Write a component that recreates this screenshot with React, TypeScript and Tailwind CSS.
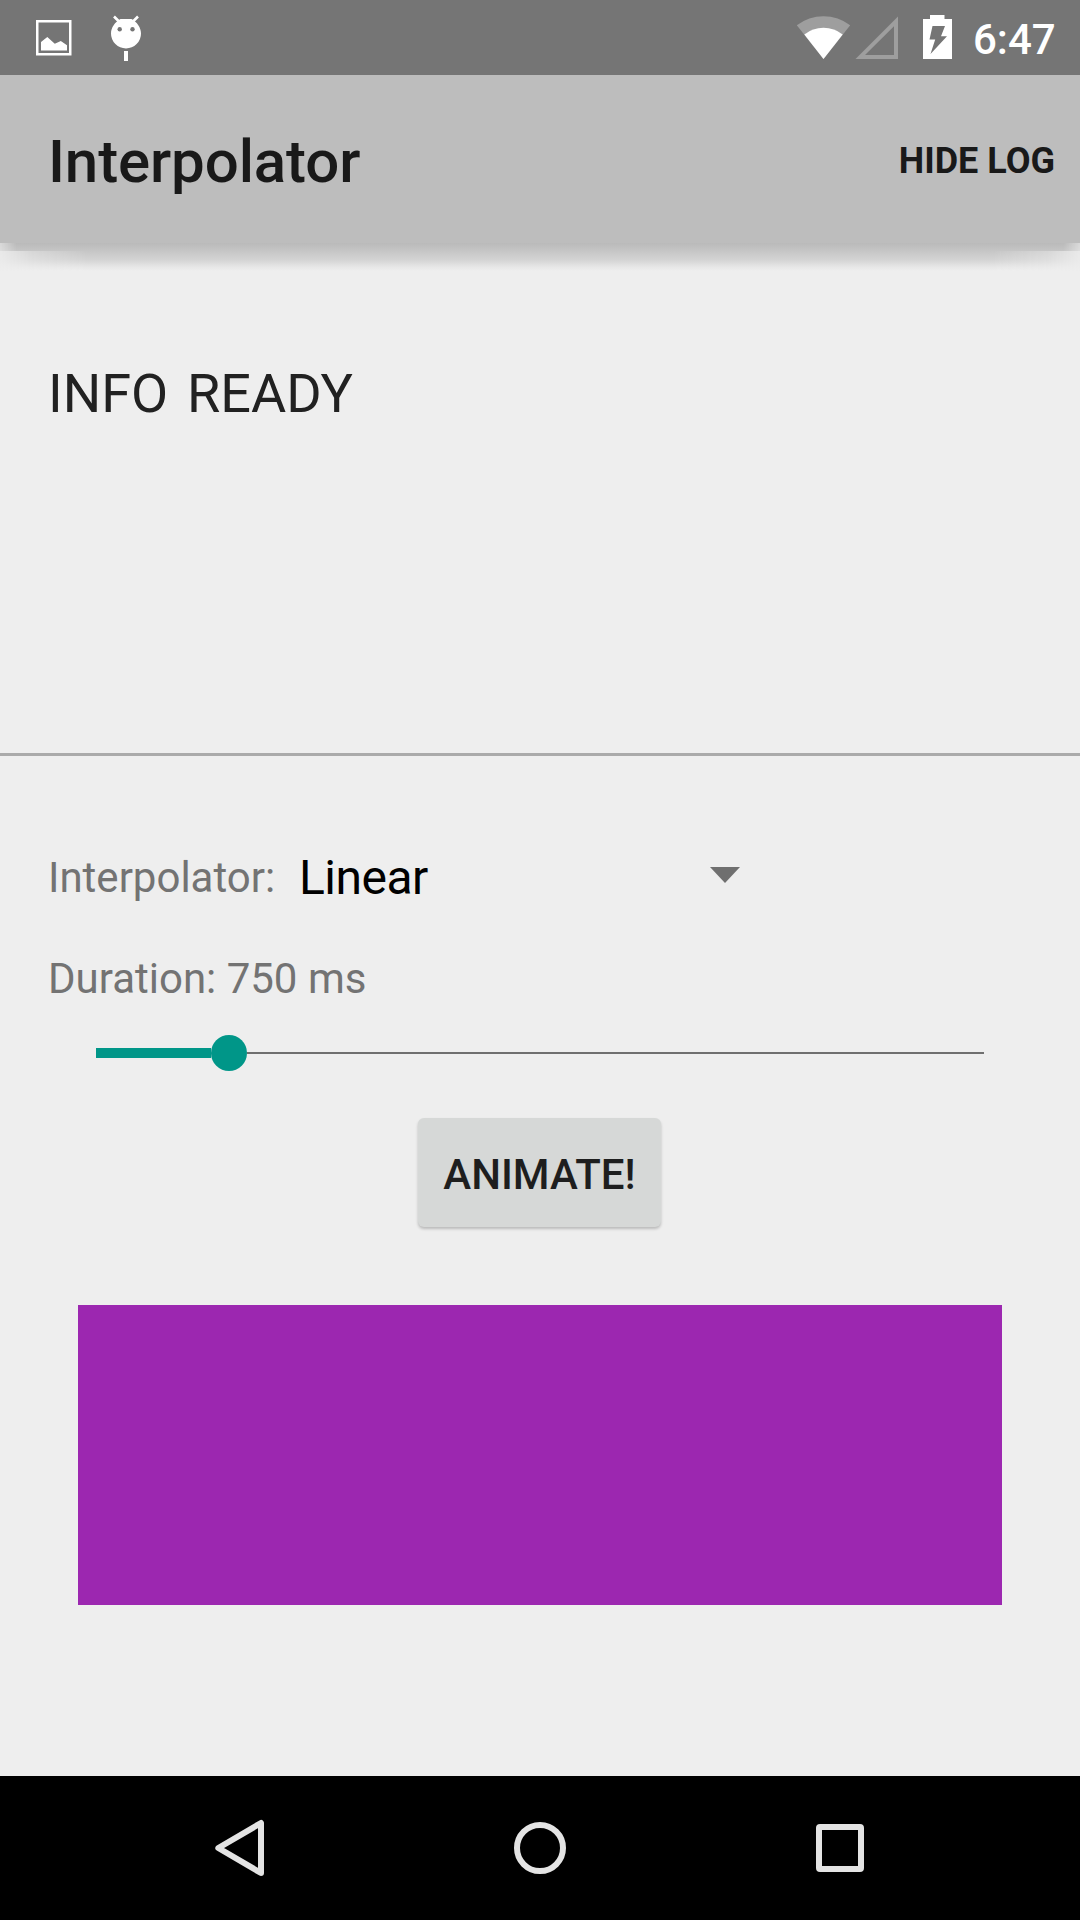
import React from 'react';

function StatusBar() {
  return (
    <div className="flex h-[75px] items-start bg-[#757575]">
      <svg width="200" height="75" viewBox="0 0 200 75" className="shrink-0">
        <path d="M36 20h35.500v35.500H36zM38.500 22.500v30.500h30.500V22.500z" fill="#fff" fillRule="evenodd" />
        <path d="M41 42l6.300-5 7.500 6.800 6-2.800 6.200 4.300V50.600H41z" fill="#fff" />
        <path d="M114 16.500l6 6M138 16.500l-6 6" stroke="#fff" strokeWidth="2.600" />
        <path d="M120.500 19h11C137 22 141 27.500 141 33.500a15 15 0 0 1-30 0C111 27.500 115 22 120.500 19z" fill="#fff" />
        <circle cx="119.700" cy="29.300" r="2.200" fill="#757575" />
        <circle cx="132.500" cy="29.300" r="2.200" fill="#757575" />
        <path d="M124 51h4v10h-4z" fill="#fff" />
      </svg>
      <div className="flex-1" />
      <svg width="174" height="75" viewBox="790 0 174 75" className="shrink-0">
        <path d="M796.800 25.300a43.500 43.500 0 0 1 53.400 0L823.500 59z" fill="#9e9e9e" />
        <path d="M804.300 34.500a31 31 0 0 1 38.400 0L823.500 59z" fill="#fff" />
        <path d="M898 16.500V59h-42.500zM894 26.300L865 55h29z" fill="#9e9e9e" fillRule="evenodd" />
        <path d="M930 15h14.500v4H952v40h-29V19h7z" fill="#fff" />
        <path d="M932.500 26H945l-4 10.300h6L930.500 54l4.700-14.500H929.500z" fill="#757575" />
      </svg>
      <span className="w-[116px] pl-[9px] pt-[15px] text-[42px] font-medium leading-[49px] text-white">6:47</span>
    </div>
  );
}

function AppBar() {
  return (
    <header className="relative z-10 flex h-[168px] items-center justify-between bg-[#bdbdbd] pl-12 pr-[25px] text-[#191919]">
      <h1 className="pt-1.5 text-[60px] font-medium leading-[70px] tracking-[-0.12px]">Interpolator</h1>
      <button className="pt-1 text-[36px] font-bold leading-[42px]">HIDE LOG</button>
      <div className="absolute left-0 top-full w-full">
        <div className="h-2 bg-linear-to-b from-[#bababa] to-[#c6c6c6] [mask-image:linear-gradient(to_right,rgba(0,0,0,0.4),black_1.5%,black_98.5%,rgba(0,0,0,0.4))]" />
        <div className="h-5 bg-[linear-gradient(to_bottom,#c6c6c6,#d4d4d4_45%,#e8e8e8_82%,#eeeeee)] [mask-image:linear-gradient(to_right,rgba(0,0,0,0.1),rgba(0,0,0,0.6)_3%,black_8%,black_92%,rgba(0,0,0,0.6)_97%,rgba(0,0,0,0.1))]" />
      </div>
    </header>
  );
}

function NavBar() {
  return (
    <nav className="flex h-[144px] items-center justify-center gap-[220px] bg-black">
      <svg width="80" height="80" viewBox="0 0 80 80" fill="none" stroke="#e4e4e4" strokeWidth="6" strokeLinejoin="round">
        <path d="M61 15v50L18.300 40z" />
      </svg>
      <svg width="80" height="80" viewBox="0 0 80 80" fill="none" stroke="#e4e4e4" strokeWidth="6">
        <circle cx="40" cy="40" r="23" />
      </svg>
      <svg width="80" height="80" viewBox="0 0 80 80" fill="none" stroke="#e4e4e4" strokeWidth="6">
        <rect x="19" y="19" width="42" height="42" rx="1" />
      </svg>
    </nav>
  );
}

export default function App() {
  return (
    <div className="flex h-[1920px] w-[1080px] flex-col overflow-hidden bg-[#eeeeee] font-['Roboto',sans-serif]">
      <StatusBar />
      <AppBar />
      <section className="h-[510px] px-12 pt-[119px]">
        <p className="whitespace-pre text-[54px] leading-[64px] text-[#212121] [word-spacing:-4px]">INFO  READY</p>
      </section>
      <div className="h-[3px] shrink-0 bg-[#aaaaaa]" />
      <main className="flex flex-1 flex-col">
        <div className="mt-[92px] flex h-[60px] items-center pl-12">
          <span className="-mt-0.5 w-[251px] text-[42px] leading-[49px] text-[#737373]">Interpolator:</span>
          <span className="w-[411px] text-[48px] leading-[56px] tracking-[-0.5px] text-black">Linear</span>
          <svg width="30" height="16" viewBox="0 0 30 16" className="-mt-1.5"><path d="M0 0h30L15 16z" fill="#6f6f6f" /></svg>
        </div>
        <p className="mt-[46px] pl-12 text-[42px] leading-[49px] text-[#737373]">Duration: 750 ms</p>
        <div className="mx-24 mt-[32px] flex h-9 items-center">
          <div className="h-2.5 w-[115px] bg-[#009688]" />
          <div className="size-9 rounded-full bg-[#009688]" />
          <div className="h-0.5 flex-1 bg-[#6f6f6f]" />
        </div>
        <button className="ml-[418px] mt-[47px] h-[109px] w-[243px] rounded-md bg-[#d6d8d7] pt-[3px] text-[42px] font-medium leading-[49px] text-[#1e1e1e] shadow-[0_2px_3px_rgba(0,0,0,0.22)]">ANIMATE!</button>
        <div className="mx-[78px] mt-[78px] h-[300px] bg-[#9c27b0]" />
      </main>
      <NavBar />
    </div>
  );
}
